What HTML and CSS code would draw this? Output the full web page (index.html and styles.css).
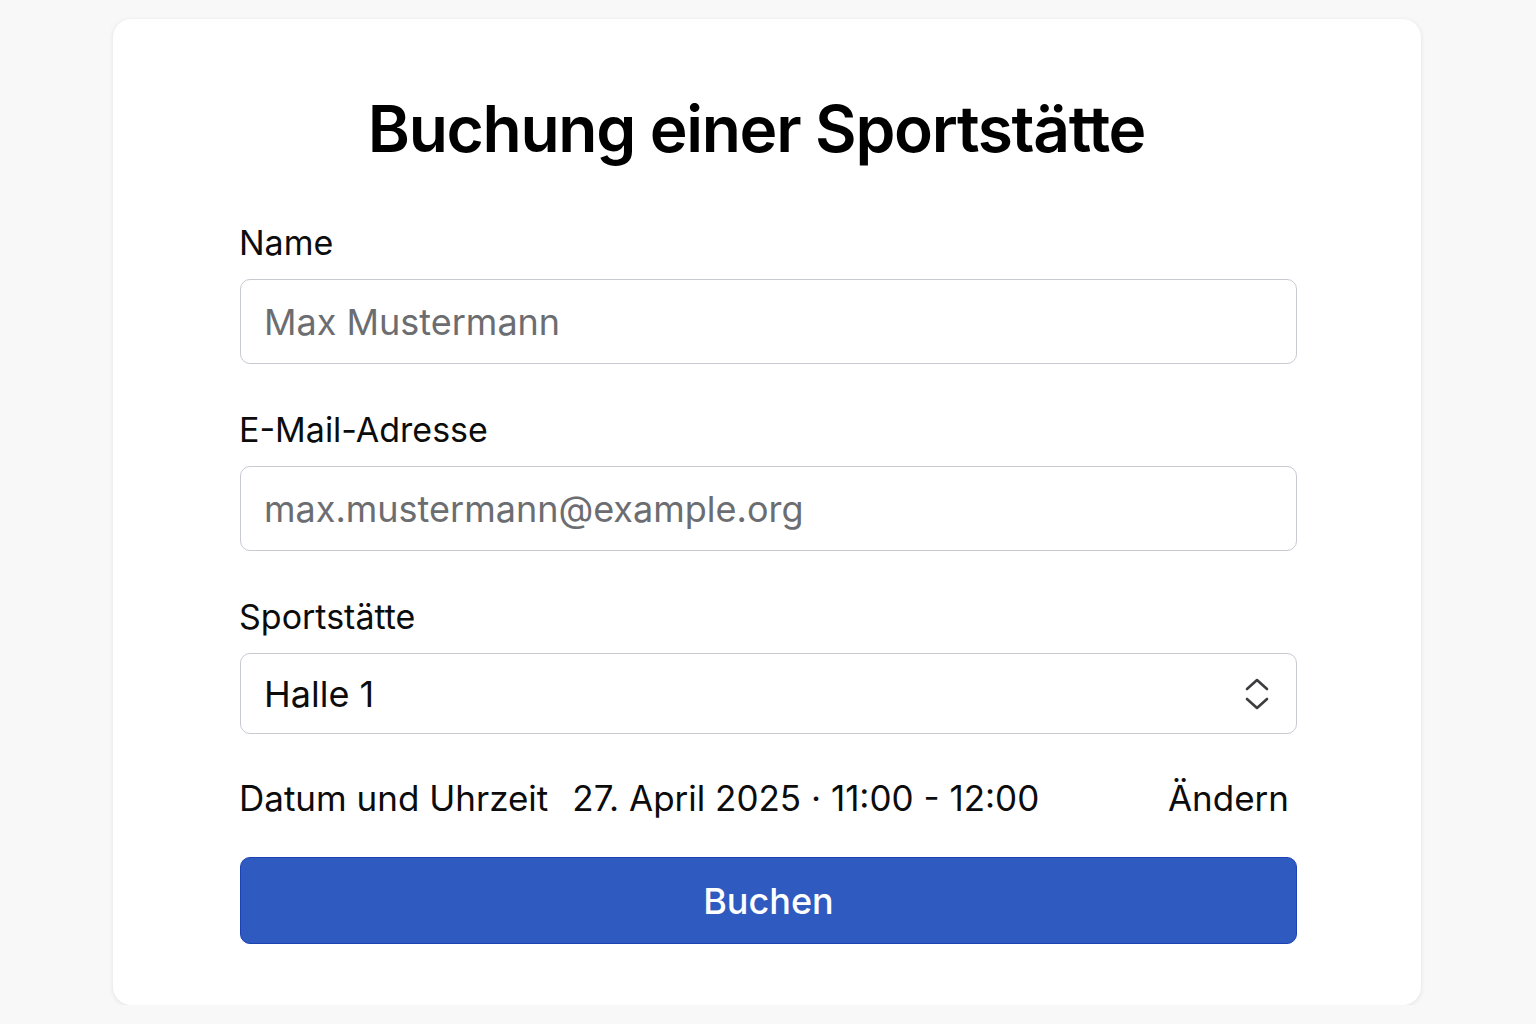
FILE: index.html
```html
<!DOCTYPE html>
<html lang="de">
<head>
<meta charset="utf-8">
<title>Buchung einer Sportstätte</title>
<link rel="stylesheet" href="styles.css">
</head>
<body>
<main class="card">
  <h1 class="title">Buchung einer Sportstätte</h1>
  <form class="form">
    <div class="field">
      <label class="label" for="name">Name</label>
      <input class="input" id="name" type="text" placeholder="Max Mustermann">
    </div>
    <div class="field">
      <label class="label" for="email">E-Mail-Adresse</label>
      <input class="input" id="email" type="email" placeholder="max.mustermann@example.org">
    </div>
    <div class="field">
      <label class="label" for="venue">Sportstätte</label>
      <div class="select">
        <span class="select-value">Halle 1</span>
        <svg class="select-icon" width="28" height="34" viewBox="0 0 28 34" fill="none" stroke="#3d3d3f" stroke-width="2.6" stroke-linecap="round" stroke-linejoin="round">
          <path d="M4 12 L14 3 L24 12"/>
          <path d="M4 22 L14 31 L24 22"/>
        </svg>
      </div>
    </div>
    <div class="datetime">
      <span class="dt-label">Datum und Uhrzeit</span>
      <span class="dt-value">27. April 2025 · 11:00 - 12:00</span>
      <a class="dt-change" href="#">Ändern</a>
    </div>
    <button class="button" type="button">Buchen</button>
  </form>
</main>
</body>
</html>
```

FILE: styles.css
```css
* { box-sizing: border-box; }

html, body {
  margin: 0;
  padding: 0;
  background: #f8f8f8;
  font-family: Inter, "Noto Sans", "Liberation Sans", sans-serif;
  color: #0c0c0c;
}

body {
  padding-top: 19px;
}

.card {
  width: 1308px;
  margin-left: 113px;
  background: #ffffff;
  border-radius: 18px;
  box-shadow: 0 1px 5px rgba(0, 0, 0, 0.09), 0 0 1px rgba(0, 0, 0, 0.05);
  padding: 72px 124px 61px 127px;
}

.title {
  margin: 0;
  text-align: center;
  font-size: 64px;
  line-height: 76px;
  font-weight: 600;
  letter-spacing: -1.3px;
  color: #000;
  padding-right: 24px;
}

.form {
  display: flex;
  flex-direction: column;
  margin-top: 56px;
}

.field {
  display: flex;
  flex-direction: column;
  margin-bottom: 46px;
}

.label {
  font-size: 34px;
  line-height: 40px;
  font-weight: 400;
  margin-bottom: 16px;
  margin-left: -1px;
  color: #0c0c0c;
}

.input {
  height: 85px;
  width: 100%;
  border: 1.5px solid #c8cad1;
  border-radius: 10px;
  padding: 0 23px;
  font-family: inherit;
  font-size: 36px;
  color: #111;
  background: #fff;
  outline: none;
}

.input::placeholder {
  color: #6c6d71;
}

.select {
  height: 81px;
  display: flex;
  align-items: center;
  justify-content: space-between;
  border: 1.5px solid #c8cad1;
  border-radius: 10px;
  padding: 0 25px 0 23px;
  font-size: 36px;
}

.select-value {
  color: #0c0c0c;
}

.select-icon {
  display: block;
}

.datetime {
  display: flex;
  align-items: baseline;
  font-size: 35px;
  line-height: 40px;
  margin-top: -2px;
  margin-left: -1px;
  padding-right: 8px;
}

.dt-label {
  margin-right: 24px;
}

.dt-value {
  flex: 1;
}

.dt-change {
  color: #0c0c0c;
  text-decoration: none;
}

.button {
  margin-top: 39px;
  height: 87px;
  width: 100%;
  background: #2f5bc1;
  border: 1.5px solid #1c42b4;
  border-radius: 10px;
  color: #ffffff;
  font-family: inherit;
  font-size: 36px;
  font-weight: 500;
  cursor: pointer;
}
```
